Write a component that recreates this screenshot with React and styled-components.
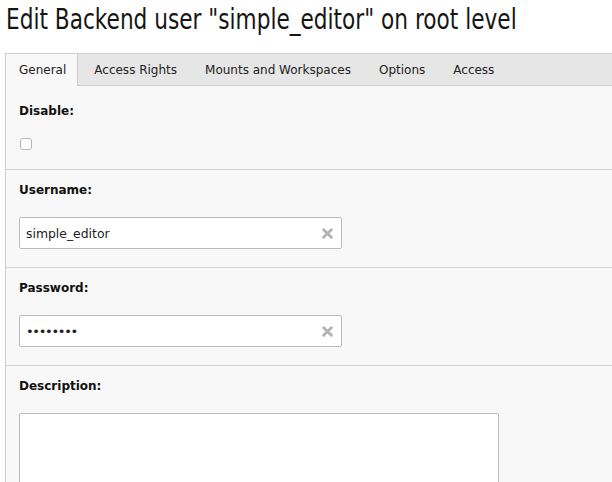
import React from 'react'
import styled, { createGlobalStyle } from 'styled-components'

const Global = createGlobalStyle`
  body {
    margin: 0;
    background: #ffffff;
    font-family: 'DejaVu Sans', Verdana, sans-serif;
    color: #000;
  }
`

const Page = styled.div`
  width: 612px;
  height: 482px;
  overflow: hidden;
`

const TitleRow = styled.div`
  height: 53px;
  padding: 3px 0 0 6px;
  box-sizing: border-box;
`

const Title = styled.h1`
  display: inline-block;
  margin: 0;
  font-family: 'DejaVu Sans', sans-serif;
  font-weight: normal;
  font-size: 28px;
  line-height: 34px;
  color: #151515;
  white-space: nowrap;
  transform: scaleX(0.773);
  transform-origin: left center;
`

const Panel = styled.div`
  margin-left: 5px;
  width: 700px;
  border-left: 1px solid #cfcfcf;
  border-top: 1px solid #cfcfcf;
  background: #f8f8f8;
`

const TabBar = styled.div`
  display: flex;
  height: 31px;
  background: #e6e6e6;
  border-bottom: 1px solid #cdcdcd;
`

const Tab = styled.div`
  display: flex;
  align-items: center;
  padding: ${(p) => (p.$active ? '0 11px 0 13px' : '0 14px')};
  height: ${(p) => (p.$active ? '32px' : '31px')};
  box-sizing: border-box;
  font-size: 12px;
  color: #222;
  background: ${(p) => (p.$active ? '#f8f8f8' : 'transparent')};
  border-right: ${(p) => (p.$active ? '1px solid #cdcdcd' : 'none')};
  margin-right: ${(p) => (p.$active ? '2px' : '0')};
`

const Section = styled.div`
  padding: ${(p) => (p.$first ? '18px 13px 19px' : '13px 13px 18px')};
  border-bottom: ${(p) => (p.$last ? 'none' : '1px solid #d2d2d2')};
`

const Label = styled.div`
  font-size: 12px;
  font-weight: bold;
  line-height: 15px;
  color: #111;
  margin-bottom: 19px;
`

const Check = styled.div`
  width: 10px;
  height: 10px;
  margin: 3px 0 0 1px;
  border: 1px solid #b5b5b5;
  border-radius: 3px;
  background: #fff;
`

const Field = styled.div`
  display: flex;
  align-items: center;
  justify-content: space-between;
  width: 323px;
  height: 32px;
  box-sizing: border-box;
  padding: 0 7px 0 6px;
  background: #fff;
  border: 1px solid #bbbbbb;
  border-radius: 2px;
  font-size: 12.4px;
  color: #222;
`

const Dots = styled.span`
  font-size: 13px;
  letter-spacing: -1.3px;
  color: #222;
`

const Clear = styled.svg`
  width: 11px;
  height: 11px;
  margin-right: 1px;
`

const TextArea = styled.div`
  width: 478px;
  height: 90px;
  background: #fff;
  border: 1px solid #bbbbbb;
  border-radius: 2px;
`

const ClearIcon = () => (
  <Clear viewBox="0 0 10 10">
    <path d="M1.5 1.5 L8.5 8.5 M8.5 1.5 L1.5 8.5" stroke="#b3b3b3" strokeWidth="2.6" strokeLinecap="round" />
  </Clear>
)

const tabs = ['General', 'Access Rights', 'Mounts and Workspaces', 'Options', 'Access']

export default function App() {
  return (
    <Page>
      <Global />
      <TitleRow>
        <Title>Edit Backend user "simple_editor" on root level</Title>
      </TitleRow>
      <Panel>
        <TabBar>
          {tabs.map((t, i) => (
            <Tab key={t} $active={i === 0}>
              {t}
            </Tab>
          ))}
        </TabBar>
        <Section $first>
          <Label>Disable:</Label>
          <Check />
        </Section>
        <Section>
          <Label>Username:</Label>
          <Field>
            <span>simple_editor</span>
            <ClearIcon />
          </Field>
        </Section>
        <Section>
          <Label>Password:</Label>
          <Field>
            <Dots>••••••••</Dots>
            <ClearIcon />
          </Field>
        </Section>
        <Section $last>
          <Label>Description:</Label>
          <TextArea />
        </Section>
      </Panel>
    </Page>
  )
}
